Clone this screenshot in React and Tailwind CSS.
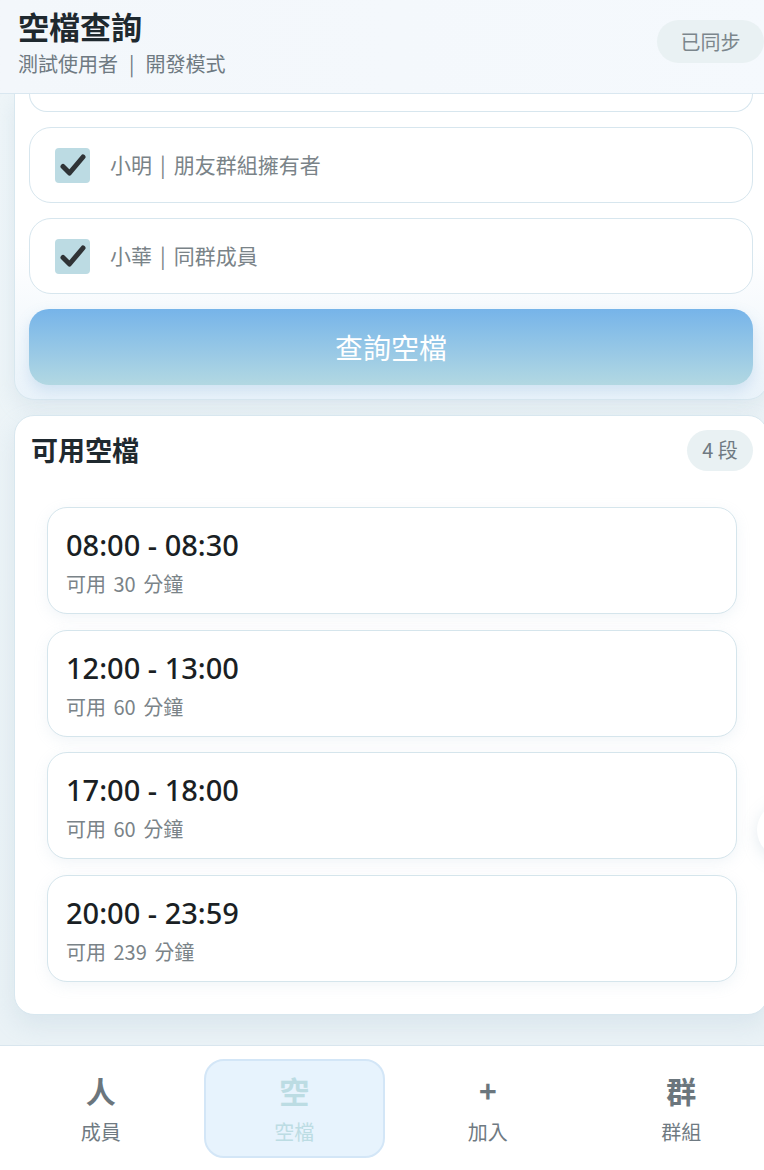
const font = { fontFamily: '"Noto Sans CJK TC", "Noto Sans", sans-serif' };

const members = [
  { name: '小明', role: '朋友群組擁有者' },
  { name: '小華', role: '同群成員' },
];

const slots = [
  { range: '08:00 - 08:30', mins: 30 },
  { range: '12:00 - 13:00', mins: 60 },
  { range: '17:00 - 18:00', mins: 60 },
  { range: '20:00 - 23:59', mins: 239 },
];

const tabs = [
  { icon: '人', label: '成員' },
  { icon: '空', label: '空檔', active: true },
  { icon: '+', label: '加入' },
  { icon: '群', label: '群組' },
];

function Check() {
  return (
    <span className="flex h-[35px] w-[35px] shrink-0 items-center justify-center rounded-[4px] bg-[#bcdbe3]">
      <svg width="26" height="24" viewBox="0 0 26 24">
        <path d="M3 13.5 L9.5 20 L23 4" fill="none" stroke="#2f3336" strokeWidth="5" strokeLinecap="round" strokeLinejoin="round" />
      </svg>
    </span>
  );
}

export default function App() {
  return (
    <div className="relative h-[1170px] w-[764px] overflow-hidden bg-[#edf4f7]" style={font}>
      <div className="flex h-full w-[782px] flex-col">
        <header className="flex h-[94px] shrink-0 items-start justify-between border-b border-[#d9e7f0] bg-gradient-to-r from-[#f3f7fb] to-[#f5f9fd] px-[18px] pt-[6px]">
          <div>
            <h1 className="text-[31px] font-bold leading-[40px] text-[#1f292f]">空檔查詢</h1>
            <p className="mt-[4px] text-[20px] leading-[28px] text-[#6f7a82]">
              測試使用者<span className="mx-[11px]">|</span>開發模式
            </p>
          </div>
          <span className="mt-[14px] flex h-[43px] w-[107px] items-center justify-center rounded-full bg-[#e9f1f3] text-[20px] text-[#7b868c]">已同步</span>
        </header>

        <main className="flex-1 overflow-hidden bg-gradient-to-b from-[#eef5f8] to-[#eaf2f6]">
          <section className="mx-[14px] rounded-b-[20px] border-x border-b border-[#d8e7ef] bg-gradient-to-b from-white via-white to-[#eaf3fa] px-[14px] pb-[14px] shadow-[0_8px_20px_rgba(150,180,200,0.18)]">
            <div className="h-[18px] rounded-b-[22px] border-x border-b border-[#d7e6ee] bg-white" />
            <div className="mt-[15px] flex flex-col gap-[15px]">
              {members.map((m) => (
                <label key={m.name} className="flex h-[76px] items-center gap-[20px] rounded-[22px] border border-[#d7e6ee] bg-white px-[25px]">
                  <Check />
                  <span className="text-[21px] text-[#7a8388]">
                    {m.name}
                    <span className="mx-[8px]">|</span>
                    {m.role}
                  </span>
                </label>
              ))}
              <button className="flex h-[76px] items-center justify-center rounded-[20px] bg-gradient-to-b from-[#76b4e9] to-[#b2d8e2] text-[28px] text-white shadow-[0_6px_14px_rgba(120,170,220,0.25)]">
                查詢空檔
              </button>
            </div>
          </section>

          <section className="mx-[14px] mt-[15px] rounded-[20px] border border-[#d8e7ef] bg-white pb-[32px] pl-[16px] pr-[14px] pt-[12px] shadow-[0_10px_24px_rgba(150,180,200,0.2)]">
            <div className="flex items-center justify-between">
              <h2 className="text-[27px] font-bold leading-[44px] text-[#1f292f]">可用空檔</h2>
              <span className="flex h-[41px] w-[66px] items-center justify-center rounded-full bg-[#e9f1f3] text-[20px] text-[#6f7a82]">4 段</span>
            </div>
            <div className="ml-[16px] mt-[35px] flex w-[690px] flex-col gap-[15.5px]">
              {slots.map((s) => (
                <div key={s.range} className="flex h-[107px] flex-col rounded-[20px] border border-[#d5e5ec] bg-white px-[18px] pt-[19px] shadow-[0_4px_14px_rgba(160,190,210,0.15)]">
                  <div className="text-[29px] font-medium leading-[36px] text-[#1a1f24]" style={{ fontFamily: '"Noto Sans", "Noto Sans CJK TC", sans-serif' }}>{s.range}</div>
                  <div className="mt-[7px] text-[20px] leading-[28px] text-[#7a8388] [word-spacing:3px]">可用 {s.mins} 分鐘</div>
                </div>
              ))}
            </div>
          </section>
        </main>

        <nav className="grid h-[125px] shrink-0 grid-cols-4 border-t border-[#d9e6ee] bg-white px-[4px] pt-[13px]">
          {tabs.map((t) => (
            <div
              key={t.label}
              className={
                t.active
                  ? 'mx-[6px] flex h-[99px] flex-col items-center justify-center rounded-[20px] border-2 border-[#d3e6f7] bg-[#e7f3fd]'
                  : 'mx-[6px] flex h-[99px] flex-col items-center justify-center'
              }
            >
              <span className={t.active ? 'text-[30px] font-bold leading-[36px] text-[#bcdce3]' : 'text-[30px] font-bold leading-[36px] text-[#6b767d]'}>{t.icon}</span>
              <span className={t.active ? 'mt-[10px] text-[20px] leading-[28px] text-[#bcdce3]' : 'mt-[10px] text-[20px] leading-[28px] text-[#6f7a82]'}>{t.label}</span>
            </div>
          ))}
        </nav>
      </div>
      <div className="absolute left-[757px] top-[802px] h-[56px] w-[56px] rounded-full bg-white shadow-[0_4px_16px_rgba(150,180,200,0.25)]" />
    </div>
  );
}
